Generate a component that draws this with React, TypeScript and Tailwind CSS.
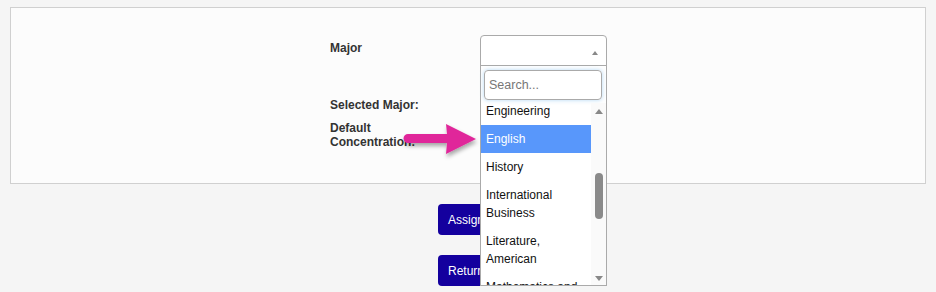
import React from 'react'

const items: string[][] = [
  ['Engineering'],
  ['English'],
  ['History'],
  ['International', 'Business'],
  ['Literature,', 'American'],
  ['Mathematics and', 'Statistics'],
]

function Dropdown() {
  return (
    <div className="absolute left-0 top-[30px] z-10 flex h-[221px] w-[127px] flex-col border border-[#aaa] bg-white">
      <div className="px-[3px] pt-[4px] pb-[3px]">
        <input
          readOnly
          placeholder="Search..."
          className="h-[30px] w-[118px] rounded-[4px] border border-[#aaa] px-[4px] text-[12.5px] text-[#333] placeholder:text-[#777] shadow-[0_0_4px_rgba(102,175,233,0.5)] outline-none"
        />
      </div>
      <div className="flex min-h-0 flex-1">
        <div className="relative flex-1 overflow-hidden">
          <ul className="-mt-[6px]">
            {items.map((lines, i) => (
              <li
                key={i}
                className={`px-[5px] py-[5px] text-[12px] leading-[18px] ${i === 1 ? 'bg-[#5897fb] text-white' : 'text-[#111]'}`}
              >
                {lines.map(l => <div key={l}>{l}</div>)}
              </li>
            ))}
          </ul>
        </div>
        <div className="flex w-[15px] flex-col items-center bg-[#fafafa] pt-[5px] pb-[3px]">
          <svg width="10" height="6" viewBox="0 0 10 6"><path d="M1 6 L5 1 L9 6 Z" fill="#888" /></svg>
          <div className="mt-[59px] h-[46px] w-[8px] rounded-full bg-[#8a8a8a]" />
          <div className="flex-1" />
          <svg width="10" height="6" viewBox="0 0 10 6"><path d="M1 0 L9 0 L5 5 Z" fill="#888" /></svg>
        </div>
      </div>
    </div>
  )
}

function PointerArrow() {
  return (
    <svg className="absolute left-[398px] top-[118px] z-20" width="90" height="46" viewBox="0 0 90 46">
      <defs>
        <filter id="sh" x="-20%" y="-30%" width="140%" height="170%">
          <feDropShadow dx="1" dy="3" stdDeviation="2" floodColor="#000" floodOpacity="0.35" />
        </filter>
      </defs>
      <g filter="url(#sh)">
        <path d="M10 16 L49 16 L48 6 L78 21 L48 36 L49 25 L10 25 A4.5 4.5 0 0 1 10 16 Z" fill="#e0289a" />
      </g>
    </svg>
  )
}

export default function App() {
  return (
    <div className="relative min-h-screen bg-[#f5f5f5] pt-[7px] font-['Liberation_Sans',Arial,sans-serif] text-[#333]">
      <div className="ml-[10px] h-[177px] w-[916px] border border-[#d0d0d0] bg-[#fcfcfc] pl-[319px] pt-[27px]">
        <div className="flex">
          <div className="w-[150px] pt-[6px] text-[12px] leading-[14px] font-bold">Major</div>
          <div className="relative">
            <div className="relative h-[31px] w-[127px] rounded-t-[4px] border border-[#aaa] bg-white">
              <svg className="absolute right-[8px] top-[15px]" width="6" height="4" viewBox="0 0 6 4"><path d="M0 4 L3 0 L6 4 Z" fill="#888" /></svg>
            </div>
            <Dropdown />
          </div>
        </div>
        <div className="mt-[32px] text-[12px] leading-[14px] font-bold">Selected Major:</div>
        <div className="mt-[9px] text-[12px] leading-[14px] font-bold">Default<br />Concentration:</div>
      </div>
      <div className="ml-[438px] mt-[20px] flex flex-col items-start gap-[20px]">
        <button className="h-[31px] rounded-[4px] bg-[#14009e] px-[10px] text-[12px] text-white">Assign Major</button>
        <button className="h-[31px] rounded-[4px] bg-[#14009e] px-[10px] text-[12px] text-white">Return to List</button>
      </div>
      <PointerArrow />
    </div>
  )
}
